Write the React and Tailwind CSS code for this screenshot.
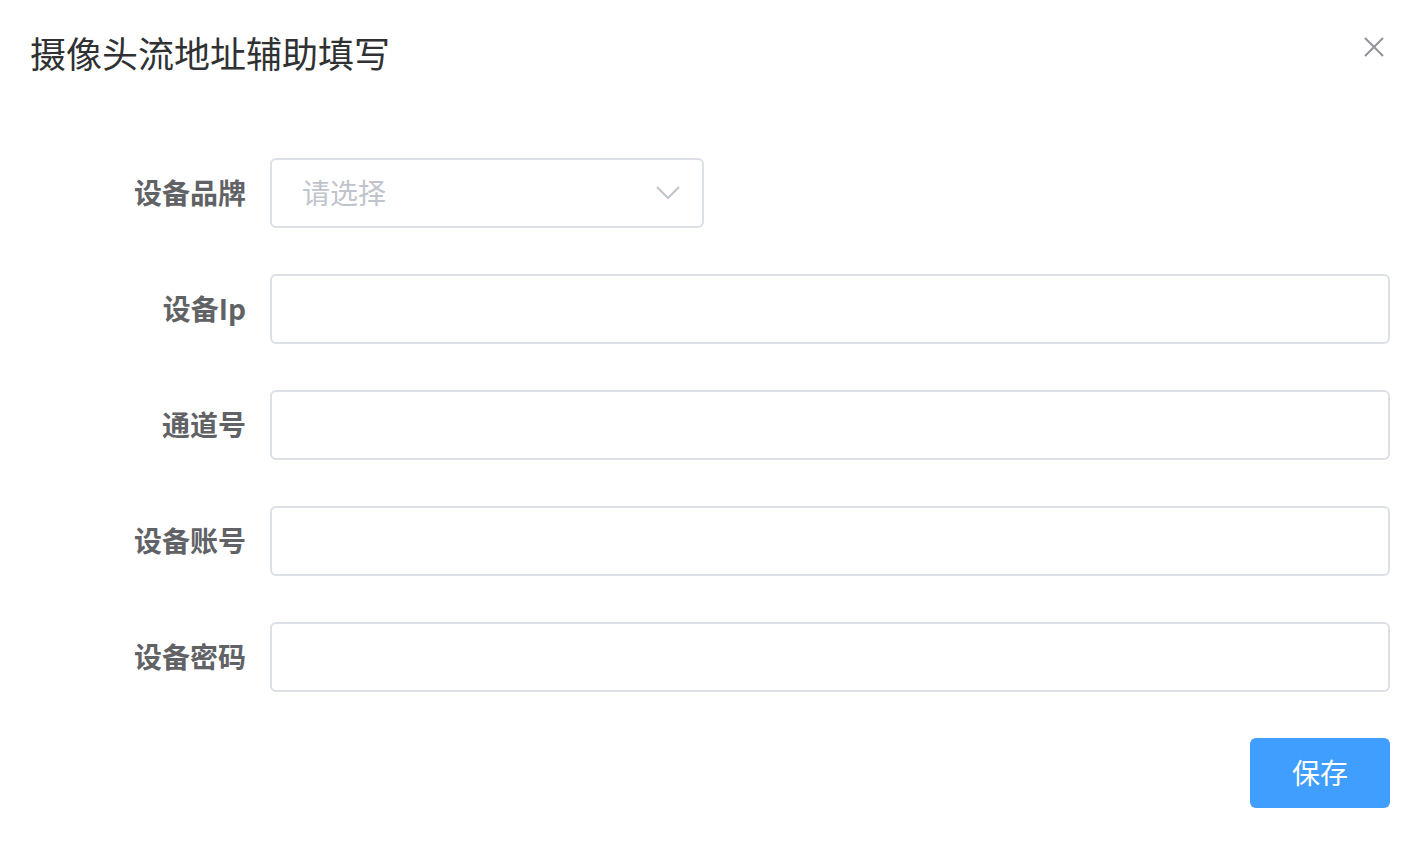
import React from "react";

const fields = ["设备Ip", "通道号", "设备账号", "设备密码"];

const Label = ({ children }) => (
  <label className="w-[240px] shrink-0 pr-[24px] pb-[2px] text-right text-[28px] font-bold leading-[66px] text-[#606266]">
    {children}
  </label>
);

export default function App() {
  return (
    <div
      className="w-full h-[841px] bg-white pl-[30px] pr-[26px]"
      style={{ fontFamily: '"Noto Sans CJK SC", "Noto Sans", sans-serif' }}
    >
      {/* 标题 */}
      <div className="flex items-start justify-between pt-[33px]">
        <h2 className="text-[36px] leading-[38px] font-normal text-[#303133]">
          摄像头流地址辅助填写
        </h2>
        <button className="mr-[6px] mt-[4px] text-[#909399]">
          <svg width="20" height="20" viewBox="0 0 20 20">
            <path d="M1 1L19 19M19 1L1 19" stroke="currentColor" strokeWidth="2" fill="none" />
          </svg>
        </button>
      </div>

      {/* 表单 */}
      <form className="mt-[87px]">
        <div className="flex items-center mb-[46px]">
          <Label>设备品牌</Label>
          <div className="flex items-center justify-between w-[434px] h-[70px] rounded-[6px] border-2 border-[#dcdfe6] pl-[30px] pr-[22px]">
            <span className="pb-[2px] text-[28px] text-[#c0c4cc]">请选择</span>
            <svg width="24" height="14" viewBox="0 0 24 14">
              <path d="M1 1L12 12L23 1" stroke="#c0c4cc" strokeWidth="2" fill="none" />
            </svg>
          </div>
        </div>

        {fields.map((f) => (
          <div key={f} className="flex items-center mb-[46px]">
            <Label>{f}</Label>
            <input
              type="text"
              className="flex-1 h-[70px] rounded-[6px] border-2 border-[#dcdfe6] px-[30px] text-[28px] outline-none"
            />
          </div>
        ))}

        <div className="flex justify-end">
          <button
            type="button"
            className="w-[140px] h-[70px] rounded-[6px] bg-[#409eff] pb-[2px] text-[28px] text-white"
          >
            保存
          </button>
        </div>
      </form>
    </div>
  );
}
